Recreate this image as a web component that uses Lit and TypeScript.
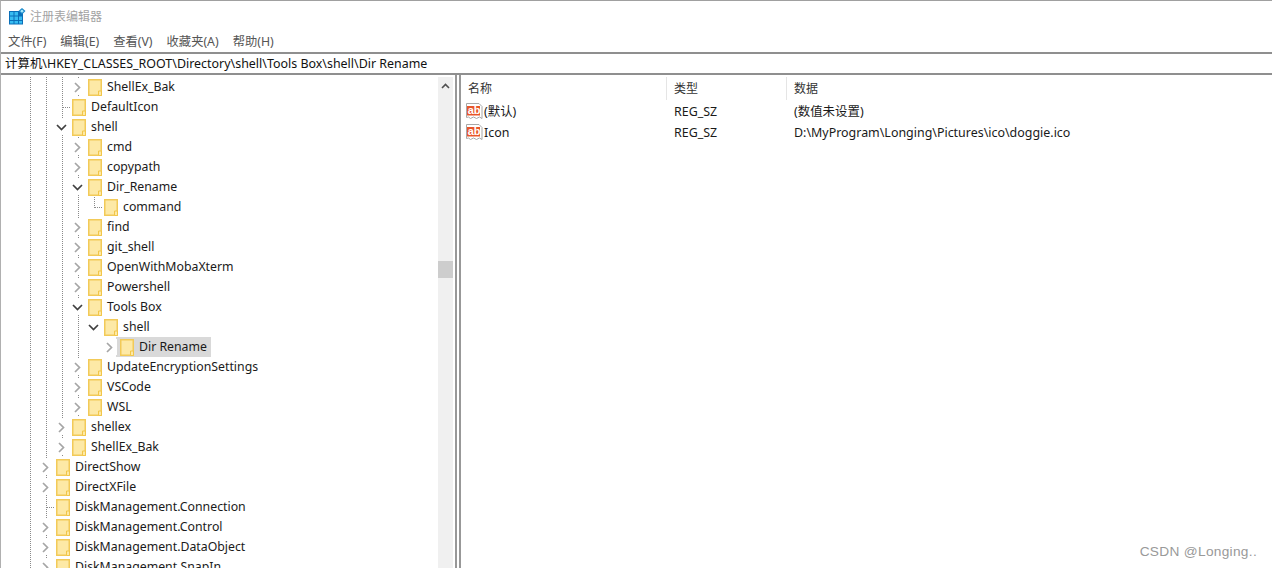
import { LitElement, html, css, svg } from "lit";
import { customElement } from "lit/decorators.js";

type Row = { t: string; l: number; c?: "r" | "d"; skip?: number[]; sel?: boolean; last?: boolean };

const rows: Row[] = [
  { t: "ShellEx_Bak", l: 2, c: "r" },
  { t: "DefaultIcon", l: 1 },
  { t: "shell", l: 1, c: "d" },
  { t: "cmd", l: 2, c: "r" },
  { t: "copypath", l: 2, c: "r" },
  { t: "Dir_Rename", l: 2, c: "d" },
  { t: "command", l: 3, last: true },
  { t: "find", l: 2, c: "r" },
  { t: "git_shell", l: 2, c: "r" },
  { t: "OpenWithMobaXterm", l: 2, c: "r" },
  { t: "Powershell", l: 2, c: "r" },
  { t: "Tools Box", l: 2, c: "d" },
  { t: "shell", l: 3, c: "d" },
  { t: "Dir Rename", l: 4, c: "r", skip: [3], sel: true },
  { t: "UpdateEncryptionSettings", l: 2, c: "r" },
  { t: "VSCode", l: 2, c: "r" },
  { t: "WSL", l: 2, c: "r" },
  { t: "shellex", l: 1, c: "r" },
  { t: "ShellEx_Bak", l: 1, c: "r" },
  { t: "DirectShow", l: 0, c: "r" },
  { t: "DirectXFile", l: 0, c: "r" },
  { t: "DiskManagement.Connection", l: 0 },
  { t: "DiskManagement.Control", l: 0, c: "r" },
  { t: "DiskManagement.DataObject", l: 0, c: "r" },
  { t: "DiskManagement.SnapIn", l: 0, c: "r" },
];

const values = [
  { n: "(默认)", ty: "REG_SZ", d: "(数值未设置)", cjk: true },
  { n: "Icon", ty: "REG_SZ", d: "D:\\MyProgram\\Longing\\Pictures\\ico\\doggie.ico", cjk: false },
];

const folder = svg`<svg class="folder" width="14" height="17" viewBox="0 0 14 17">
  <path d="M.75.75h12.500v15.500H.75z" fill="#fde9a6" stroke="#f2ca58" stroke-width="1.500"/>
  <path d="M10.500 16.500v-4.500h3v4.500z" fill="#fde9a6" stroke="#f2c649" stroke-width="1"/>
</svg>`;

const chevR = svg`<svg width="9" height="11" viewBox="0 0 9 11"><path d="M2 1l4.500 4.500L2 10" fill="none" stroke="#a6a6a6" stroke-width="1.700"/></svg>`;
const chevD = svg`<svg width="11" height="9" viewBox="0 0 11 9"><path d="M1 2l4.500 4.500L10 2" fill="none" stroke="#404040" stroke-width="1.700"/></svg>`;

const abIcon = svg`<svg class="ab" width="17" height="17" viewBox="0 0 17 17">
  <path d="M.5.5h12.500l3 3v12l-2.500-1.500-3 1.500-3-1.500-3 1.500-2-1.500-2 .5z" fill="#fff" stroke="#a8a8a8"/>
  <rect x="1" y="3" width="13" height="9.500" fill="#e8562a"/>
  <text x="1.700" y="11" font-family="Liberation Sans, sans-serif" font-size="11" font-weight="700" fill="#fff">ab</text>
</svg>`;

@customElement("app-root")
export class AppRoot extends LitElement {
  static styles = css`
    :host {
      display: block;
      width: 1272px;
      height: 568px;
      overflow: hidden;
      background: #fff;
      font-family: "Noto Sans", "Noto Sans CJK SC", sans-serif;
      font-size: 12.450px;
      color: #1a1a1a;
    }
    .win {
      height: 568px;
      box-sizing: border-box;
      border-top: 1px solid #a0a0a0;
      border-left: 1px solid #b0b0b0;
      display: flex;
      flex-direction: column;
    }
    .title {
      height: 29px;
      flex: none;
      display: flex;
      align-items: center;
      gap: 4px;
      padding-left: 8px;
      color: #a3a3a3;
      font-size: 12px;
    }
    .logo {
      align-self: flex-start;
      margin-top: 7px;
      flex: none;
    }
    .menu {
      height: 22px;
      flex: none;
      display: flex;
      align-items: center;
      gap: 14px;
      padding-left: 7px;
      color: #555;
      font-size: 12.300px;
    }
    .addr {
      height: 17px;
      flex: none;
      border-top: 2px solid #8f8f8f;
      border-bottom: 2px solid #8f8f8f;
      display: flex;
      align-items: center;
      padding: 0 0 2px 4px;
      color: #111;
      white-space: pre;
    }
    .body {
      flex: 1;
      display: flex;
      min-height: 0;
    }
    .tree {
      width: 437px;
      flex: none;
      overflow: hidden;
      padding-top: 2px;
      font-size: 12.300px;
    }
    .row {
      height: 20px;
      display: flex;
      align-items: center;
      padding-left: 21px;
      white-space: nowrap;
    }
    .cell {
      width: 16px;
      height: 20px;
      flex: none;
      position: relative;
    }
    .guide::before {
      content: "";
      position: absolute;
      left: 8px;
      top: 0;
      bottom: 0;
      width: 1px;
      background: repeating-linear-gradient(#8a8a8a 0 1px, transparent 1px 2px);
    }
    .elbow::after {
      content: "";
      position: absolute;
      left: 9px;
      top: 10px;
      width: 7px;
      height: 1px;
      background: repeating-linear-gradient(90deg, #8a8a8a 0 1px, transparent 1px 2px);
    }
    .halfg::before {
      content: "";
      position: absolute;
      left: 8px;
      top: 0;
      height: 11px;
      width: 1px;
      background: repeating-linear-gradient(#8a8a8a 0 1px, transparent 1px 2px);
    }
    .chev {
      position: absolute;
      left: 0;
      top: 2px;
      width: 15px;
      height: 16px;
      background: #fff;
      display: flex;
      align-items: center;
      justify-content: center;
    }
    .item {
      display: flex;
      align-items: center;
      height: 20px;
      margin-left: -2px;
      padding-left: 4px;
      padding-right: 4px;
      gap: 5px;
    }
    .item.sel {
      background: #d9d9d9;
    }
    .label {
      padding-bottom: 2px;
    }
    .folder {
      flex: none;
    }
    .scroll {
      width: 15px;
      flex: none;
      background: #f0f0f0;
      display: flex;
      flex-direction: column;
      align-items: center;
      margin-top: 2px;
      margin-right: 2px;
      padding-top: 6px;
      box-sizing: border-box;
    }
    .up {
      display: block;
      flex: none;
    }
    .thumb {
      width: 15px;
      height: 17px;
      background: #cdcdcd;
      margin-top: 172px;
      flex: none;
    }
    .split {
      width: 6px;
      flex: none;
      box-sizing: border-box;
      border-left: 2px solid #989898;
      border-right: 2px solid #989898;
    }
    .list {
      flex: 1;
      min-width: 0;
      position: relative;
    }
    .head {
      height: 26px;
      display: grid;
      grid-template-columns: 206px 120px 1fr;
      align-items: end;
    }
    .head div {
      height: 23px;
      box-sizing: border-box;
      margin-bottom: 1px;
      display: flex;
      align-items: center;
      padding: 0 0 2px 7px;
      border-right: 1px solid #e5e5e5;
      color: #333;
      font-size: 12px;
    }
    .head div:last-child {
      border-right: 0;
    }
    .vrow {
      height: 21px;
      display: grid;
      grid-template-columns: 206px 120px 1fr;
      align-items: center;
    }
    .name {
      display: flex;
      align-items: center;
      gap: 1px;
      padding-left: 5px;
    }
    .vrow .ty,
    .vrow .da {
      padding-left: 7px;
    }
    .vrow .cjk {
      padding-bottom: 2px;
    }
    .wm {
      position: absolute;
      right: 15px;
      bottom: 9px;
      color: #999;
      font-family: "Liberation Sans", sans-serif;
      font-size: 13.700px;
      letter-spacing: 0.300px;
    }
  `;

  private renderRow(r: Row) {
    const cols = Array.from({ length: r.l }, (_, i) => i);
    const own = r.c
      ? html`<span class="cell ${r.l >= 3 ? "" : "guide"}"><span class="chev">${r.c === "r" ? chevR : chevD}</span></span>`
      : html`<span class="cell ${r.last ? "halfg" : "guide"} elbow"></span>`;
    return html`<div class="row">
      <span class="cell guide"></span>
      ${cols.map((i) => html`<span class="cell ${r.skip?.includes(i) ? "" : "guide"}"></span>`)}
      ${own}
      <span class="item ${r.sel ? "sel" : ""}">${folder}<span class="label">${r.t}</span></span>
    </div>`;
  }

  render() {
    return html`<div class="win">
      <div class="title">
        <svg class="logo" width="17" height="17" viewBox="0 0 17 17">
          <path d="M0 3h14v13.500H0z" fill="#0a6fb8"/>
          <path d="M1 4h3.500v3.500H1zM5.500 4H9v3.500H5.500zM1 8.500h3.500V12H1zM5.500 8.500H9V12H5.500zM10 8.500h3V12h-3zM1 13h3.500v2.500H1zM5.500 13H9v2.500H5.500zM10 13h3v2.500h-3z" fill="#37bdf2"/>
          <path d="M13 0l3.500 3-3.500 3.500L9.500 3z" fill="#1787c9"/>
          <circle cx="13" cy="3.200" r="1.400" fill="#a4e6fa"/>
        </svg>
        <span>注册表编辑器</span>
      </div>
      <div class="menu">
        <span>文件(F)</span><span>编辑(E)</span><span>查看(V)</span><span>收藏夹(A)</span><span>帮助(H)</span>
      </div>
      <div class="addr">计算机\\HKEY_CLASSES_ROOT\\Directory\\shell\\Tools Box\\shell\\Dir Rename</div>
      <div class="body">
        <div class="tree">${rows.map((r) => this.renderRow(r))}</div>
        <div class="scroll">
          <svg class="up" width="9" height="6" viewBox="0 0 9 6"><path d="M1 5l3.500-3.500L8 5" fill="none" stroke="#505050" stroke-width="1.600"/></svg>
          <div class="thumb"></div>
        </div>
        <div class="split"></div>
        <div class="list">
          <div class="head"><div>名称</div><div>类型</div><div>数据</div></div>
          ${values.map(
            (v) => html`<div class="vrow">
              <div class="name">${abIcon}<span class="${v.cjk ? "cjk" : ""}">${v.n}</span></div>
              <div class="ty">${v.ty}</div>
              <div class="da ${v.cjk ? "cjk" : ""}">${v.d}</div>
            </div>`
          )}
          <div class="wm">CSDN @Longing..</div>
        </div>
      </div>
    </div>`;
  }
}
